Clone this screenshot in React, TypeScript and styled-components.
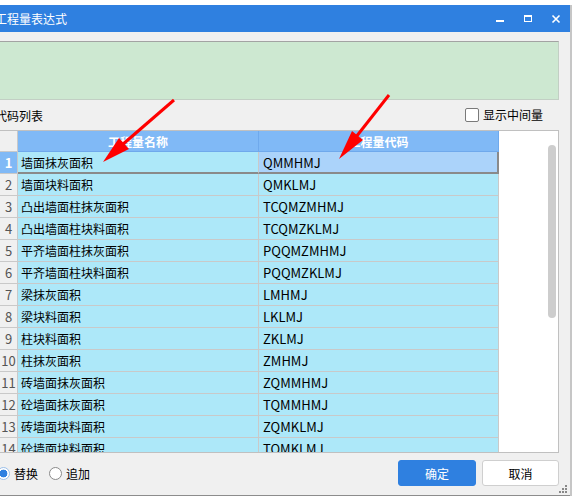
import React from 'react';
import styled, { createGlobalStyle } from 'styled-components';

const GlobalStyle = createGlobalStyle`
    html, body {
        margin: 0;
        padding: 0;
        background: #ffffff;
        overflow: hidden;
    }
    body {
        font-family: "Noto Sans CJK SC", "Noto Sans", sans-serif;
        font-size: 12px;
        color: #000;
    }
`;

const Stage = styled.div`
    position: relative;
    width: 577px;
    height: 498px;
    overflow: hidden;
`;

const Window = styled.div`
    position: relative;
    margin: 5px 0 0 -13px;
    width: 583px;
    height: 490px;
    display: flex;
    flex-direction: column;
    background: #f0f0f0;
    border-bottom: 1px solid #8c8c8c;
    box-shadow: 2px 0 0 #c6c6c6;
`;

const TitleBar = styled.div`
    height: 27px;
    display: flex;
    align-items: center;
    justify-content: space-between;
    background: #2f80e0;
    color: #fff;
    padding-left: 8px;
`;

const Title = styled.span`
    font-size: 12px;
    line-height: 27px;
`;

const Controls = styled.div`
    display: flex;
    height: 100%;
`;

const ControlButton = styled.div`
    width: 28px;
    height: 100%;
    display: flex;
    align-items: center;
    justify-content: center;
`;

const Body = styled.div`
    flex: 1;
    display: flex;
    flex-direction: column;
    padding: 9px 11px 0 8px;
`;

const ExpressionBox = styled.div`
    height: 57px;
    background: #cde8d1;
    border: 1px solid #c2cfc4;
    border-top-color: #a3a3a3;
`;

const LabelRow = styled.div`
    height: 30px;
    display: flex;
    align-items: center;
    justify-content: space-between;
`;

const CheckLabel = styled.label`
    display: flex;
    align-items: center;
    gap: 4px;
    padding-right: 16px;
    margin-top: -1px;
`;

const CheckBox = styled.span`
    width: 12px;
    height: 12px;
    border: 1px solid #7a7a7a;
    border-radius: 2px;
    background: #fff;
`;

const GridFrame = styled.div`
    height: 321px;
    display: flex;
    border: 1px solid #c0c0c0;
    background: #fff;
    overflow: hidden;
`;

const Table = styled.div`
    display: flex;
    flex-direction: column;
    width: 503px;
`;

const Row = styled.div`
    display: grid;
    grid-template-columns: 22px 241px 240px;
    height: 22px;
    flex-shrink: 0;
`;

const HeaderRow = styled(Row)`
    height: 21px;
`;

const Corner = styled.div`
    background: #f0f0f0;
    border-right: 1px solid #c9c9c9;
    border-bottom: 1px solid #c9c9c9;
`;

const HeaderCell = styled.div`
    background: #80b9f6;
    border-right: 1px solid #6fa9ec;
    border-bottom: 1px solid #6fa9ec;
    color: #fff;
    font-weight: bold;
    display: flex;
    align-items: center;
    justify-content: center;
`;

const NumCell = styled.div<{ $active?: boolean }>`
    background: ${(p) => (p.$active ? '#80b9f6' : '#f0f0f0')};
    color: ${(p) => (p.$active ? '#fff' : '#555')};
    font-weight: ${(p) => (p.$active ? 'bold' : 'normal')};
    font-size: 13px;
    border-right: 1px solid #c9c9c9;
    border-bottom: 1px solid #c9c9c9;
    display: flex;
    align-items: center;
    justify-content: center;
    padding-left: 4px;
`;

const Cell = styled.div<{ $active?: boolean; $current?: boolean }>`
    background: ${(p) => (p.$current ? '#abd3fa' : '#ade8f9')};
    border-right: ${(p) => (p.$current ? '2px solid #8a8a8a' : '1px solid #c9c9c9')};
    border-bottom: ${(p) => (p.$active ? '2px solid #8a8a8a' : '1px solid #c9c9c9')};
    display: flex;
    align-items: center;
    padding-left: 3px;
    white-space: nowrap;
    overflow: hidden;
`;

const CodeCell = styled(Cell)`
    padding-left: 4px;
    font-size: 13px;
`;

const ScrollArea = styled.div`
    flex: 1;
    display: flex;
    justify-content: flex-end;
    padding: 14px 2px 0 0;
`;

const ScrollThumb = styled.div`
    width: 8px;
    height: 173px;
    border-radius: 4px;
    background: #cdcdcd;
`;

const BottomBar = styled.div`
    display: flex;
    align-items: center;
    justify-content: space-between;
    padding: 7px 0 9px;
`;

const RadioGroup = styled.div`
    display: flex;
    align-items: center;
    gap: 11px;
    margin-left: 2px;
`;

const RadioLabel = styled.label`
    display: flex;
    align-items: center;
    gap: 4px;
`;

const Radio = styled.span<{ $checked?: boolean }>`
    width: 11px;
    height: 11px;
    border-radius: 50%;
    border: 1px solid ${(p) => (p.$checked ? '#9cc0ea' : '#8a8a8a')};
    background: ${(p) => (p.$checked ? 'radial-gradient(circle, #2f80e0 0 3.6px, #fff 4.2px)' : '#fff')};
`;

const Buttons = styled.div`
    display: flex;
    gap: 6px;
`;

const Button = styled.button<{ $primary?: boolean }>`
    width: ${(p) => (p.$primary ? '78px' : '77px')};
    height: 26px;
    border-radius: 3px;
    font-family: inherit;
    font-size: 12px;
    cursor: pointer;
    color: ${(p) => (p.$primary ? '#fff' : '#000')};
    background: ${(p) => (p.$primary ? '#2f80e0' : '#fff')};
    border: 1px solid ${(p) => (p.$primary ? '#2f80e0' : '#cfcfcf')};
`;

const Grip = styled.svg`
    position: absolute;
    right: 3px;
    bottom: 2px;
`;

const Annotations = styled.svg`
    position: absolute;
    left: 0;
    top: 0;
    pointer-events: none;
`;

const rows = [
    ['墙面抹灰面积', 'QMMHMJ'],
    ['墙面块料面积', 'QMKLMJ'],
    ['凸出墙面柱抹灰面积', 'TCQMZMHMJ'],
    ['凸出墙面柱块料面积', 'TCQMZKLMJ'],
    ['平齐墙面柱抹灰面积', 'PQQMZMHMJ'],
    ['平齐墙面柱块料面积', 'PQQMZKLMJ'],
    ['梁抹灰面积', 'LMHMJ'],
    ['梁块料面积', 'LKLMJ'],
    ['柱块料面积', 'ZKLMJ'],
    ['柱抹灰面积', 'ZMHMJ'],
    ['砖墙面抹灰面积', 'ZQMMHMJ'],
    ['砼墙面抹灰面积', 'TQMMHMJ'],
    ['砖墙面块料面积', 'ZQMKLMJ'],
    ['砼墙面块料面积', 'TQMKLMJ'],
];

const App: React.FC = () => {
    return (
        <Stage>
            <GlobalStyle />
            <Window>
                <TitleBar>
                    <Title>工程量表达式</Title>
                    <Controls>
                        <ControlButton>
                            <svg width="10" height="10" viewBox="0 0 10 10">
                                <rect x="1" y="6" width="8" height="2" fill="#fff" />
                            </svg>
                        </ControlButton>
                        <ControlButton>
                            <svg width="10" height="10" viewBox="0 0 10 10">
                                <rect x="1.5" y="1.5" width="7" height="6" fill="none" stroke="#fff" strokeWidth="1" />
                                <rect x="1" y="1" width="8" height="2" fill="#fff" />
                            </svg>
                        </ControlButton>
                        <ControlButton>
                            <svg width="10" height="10" viewBox="0 0 10 10">
                                <path d="M1.5 1.5 L8.5 8.5 M8.5 1.5 L1.5 8.5" stroke="#fff" strokeWidth="1.6" />
                            </svg>
                        </ControlButton>
                    </Controls>
                </TitleBar>
                <Body>
                    <ExpressionBox />
                    <LabelRow>
                        <span>代码列表</span>
                        <CheckLabel>
                            <CheckBox />
                            <span>显示中间量</span>
                        </CheckLabel>
                    </LabelRow>
                    <GridFrame>
                        <Table>
                            <HeaderRow>
                                <Corner />
                                <HeaderCell>工程量名称</HeaderCell>
                                <HeaderCell>工程量代码</HeaderCell>
                            </HeaderRow>
                            {rows.map(([name, code], i) => (
                                <Row key={code}>
                                    <NumCell $active={i === 0}>{i + 1}</NumCell>
                                    <Cell $active={i === 0}>{name}</Cell>
                                    <CodeCell $active={i === 0} $current={i === 0}>
                                        {code}
                                    </CodeCell>
                                </Row>
                            ))}
                        </Table>
                        <ScrollArea>
                            <ScrollThumb />
                        </ScrollArea>
                    </GridFrame>
                    <BottomBar>
                        <RadioGroup>
                            <RadioLabel>
                                <Radio $checked />
                                <span>替换</span>
                            </RadioLabel>
                            <RadioLabel>
                                <Radio />
                                <span>追加</span>
                            </RadioLabel>
                        </RadioGroup>
                        <Buttons>
                            <Button $primary>确定</Button>
                            <Button>取消</Button>
                        </Buttons>
                    </BottomBar>
                </Body>
                <Grip width="8" height="8" viewBox="0 0 8 8">
                    <rect x="6" y="0" width="2" height="2" fill="#888" />
                    <rect x="3" y="3" width="2" height="2" fill="#888" />
                    <rect x="6" y="3" width="2" height="2" fill="#888" />
                    <rect x="0" y="6" width="2" height="2" fill="#888" />
                    <rect x="3" y="6" width="2" height="2" fill="#888" />
                    <rect x="6" y="6" width="2" height="2" fill="#888" />
                </Grip>
            </Window>
            <Annotations width="577" height="498" viewBox="0 0 577 498">
                <line x1="174" y1="100" x2="122" y2="145" stroke="#ff0000" strokeWidth="3" />
                <polygon points="103,162 129,149 119,138" fill="#ff0000" />
                <line x1="389" y1="95" x2="356" y2="137" stroke="#ff0000" strokeWidth="3" />
                <polygon points="339,159 363,140 352,131" fill="#ff0000" />
            </Annotations>
        </Stage>
    );
};

export default App;
